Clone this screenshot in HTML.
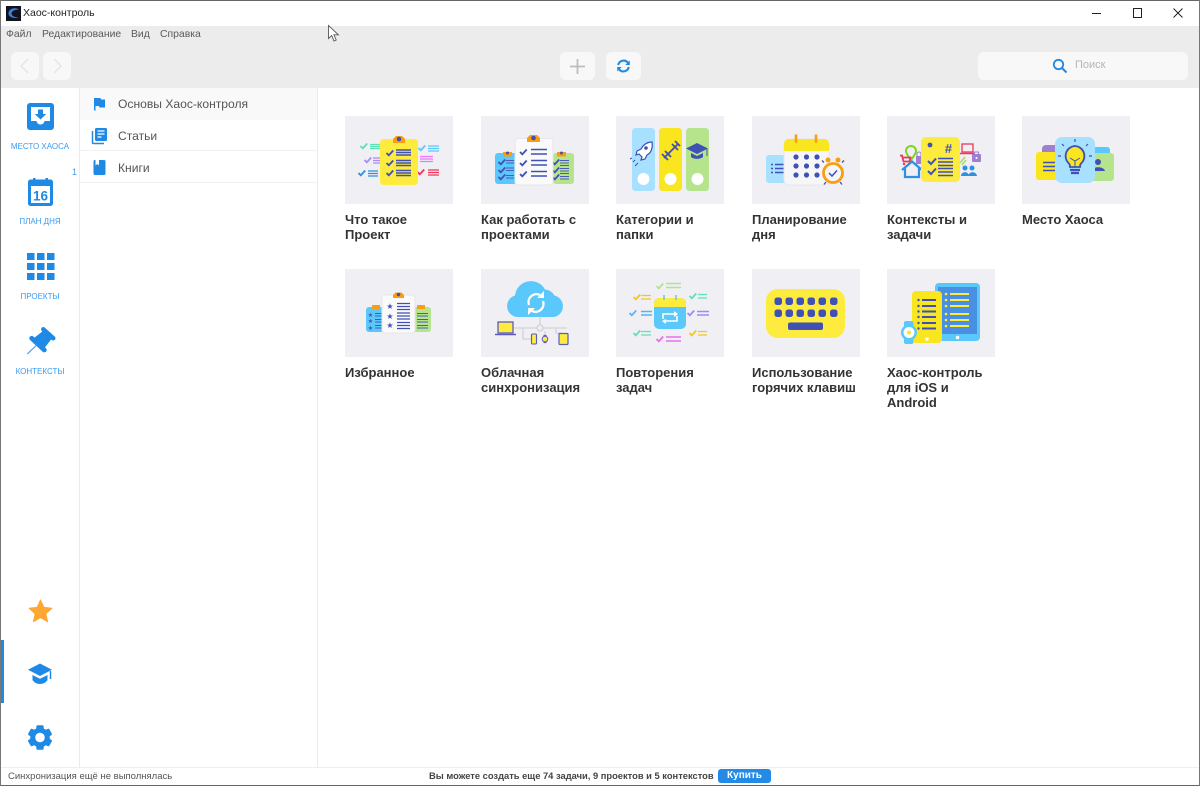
<!DOCTYPE html>
<html lang="ru"><head><meta charset="utf-8"><title>Хаос-контроль</title>
<style>
html,body{margin:0;padding:0;width:1200px;height:786px;overflow:hidden;background:#fff;font-family:"Liberation Sans",sans-serif}
.a{position:absolute}
#win{position:relative;width:1200px;height:786px;overflow:hidden;background:#fff}
.btn{position:absolute;top:52px;height:28px;background:#f8f8f8;border-radius:6px}
.menu{position:absolute;top:28px;font-size:10.4px;line-height:13px;color:#5a5a5a}
.rail{position:absolute;left:1px;width:78px;text-align:center;font-size:8px;line-height:11px;color:#3a9bf0}
.side{position:absolute;left:118px;font-size:12.1px;line-height:16px;color:#555}
.card{position:absolute;width:108px;height:88px;background:#efeff4}
.card svg{display:block}
.t{position:absolute;width:125px;font-size:13px;line-height:15px;font-weight:bold;color:#333}
</style></head><body><div id="win">
<svg width="0" height="0" style="position:absolute"><defs>
<symbol id="c" overflow="visible" width="1" height="1"><path d="M-3.5 0l2.300 2.300 4.400-4.800" fill="none" stroke="currentColor" stroke-width="1.800"/></symbol>
</defs></svg>

<!-- title bar -->
<div class="a" style="left:0;top:26px;width:1200px;height:62px;background:#ececec"></div>
<svg class="a" style="left:6px;top:6px" width="15" height="15" viewBox="0 0 15 15"><rect width="15" height="15" fill="#11131c"/><path d="M13 3.500C9 1 3 2.500 2.500 7c-.4 4 5 6 10.500 4.500C9 11.500 5.500 10 5.500 7.500S9 3.500 13 3.500z" fill="#3f7fd8"/></svg>
<div class="a" style="left:23px;top:7px;font-size:10.5px;line-height:13px;color:#222">Хаос-контроль</div>
<svg class="a" style="left:1085px;top:0" width="110" height="26" viewBox="0 0 110 26"><path d="M7 13.500h9" stroke="#222"/><rect x="48.500" y="8.500" width="8" height="9" fill="none" stroke="#222"/><path d="M88.500 8.500l9 9M97.500 8.500l-9 9" stroke="#222" fill="none"/></svg>

<div class="menu" style="left:6px">Файл</div>
<div class="menu" style="left:42px">Редактирование</div>
<div class="menu" style="left:131px">Вид</div>
<div class="menu" style="left:160px">Справка</div>

<!-- toolbar -->
<div class="btn" style="left:11px;width:28px"><svg width="28" height="28"><path d="M17 7l-7 7 7 7" fill="none" stroke="#e6e6e6" stroke-width="1.500"/></svg></div>
<div class="btn" style="left:43px;width:28px"><svg width="28" height="28"><path d="M11 7l7 7-7 7" fill="none" stroke="#e6e6e6" stroke-width="1.500"/></svg></div>
<div class="btn" style="left:560px;width:35px"><svg width="35" height="28"><path d="M17.500 7v15M10 14.500h15" stroke="#bdbdbd" stroke-width="1.800"/></svg></div>
<div class="btn" style="left:606px;width:35px"><svg width="35" height="28"><path d="M12.200 13A5.500 5.500 0 0 1 22 10.800M22.800 15A5.500 5.500 0 0 1 13 17.200" fill="none" stroke="#1f8ae6" stroke-width="2.100"/><path d="M23.800 8.500v4.500h-4.500zM11.200 19.500V15h4.500z" fill="#1f8ae6"/></svg></div>
<div class="btn" style="left:978px;width:210px"></div>
<svg class="a" style="left:1052px;top:58px" width="16" height="16"><circle cx="6.500" cy="6.500" r="4.700" fill="none" stroke="#1f8ae6" stroke-width="1.800"/><path d="M10 10l4.500 4.500" stroke="#1f8ae6" stroke-width="2"/></svg>
<div class="a" style="left:1075px;top:59px;font-size:11px;line-height:13px;color:#b5b5b5">Поиск</div>

<!-- rail -->
<div class="a" style="left:79px;top:88px;width:1px;height:680px;background:#ebebeb"></div>
<svg class="a" style="left:1px;top:88px" width="78" height="680" viewBox="1 88 78 680">
<rect x="27" y="103" width="27" height="27" rx="3" fill="#1f8ae6"/>
<path d="M31 107h19v14h-5.500c-.6 2.500-2.200 3.500-4 3.500s-3.400-1-4-3.500H31z" fill="#fff"/>
<path d="M38 109.500h5v4.500h3.200l-5.700 5.500-5.700-5.500H38z" fill="#1f8ae6"/>

<path d="M28 182a2.500 2.500 0 0 1 2.500-2.500H33V178h2.500v1.500h10V178H48v1.500h2.500A2.500 2.500 0 0 1 53 182v21.500a2.500 2.500 0 0 1-2.500 2.500h-20a2.500 2.500 0 0 1-2.500-2.500z" fill="#1f8ae6"/>
<rect x="31" y="186" width="19" height="17" fill="#fff"/>
<text x="40.500" y="200.500" text-anchor="middle" font-family="Liberation Sans" font-weight="bold" font-size="13.500" fill="#1f8ae6">16</text>

<g fill="#1f8ae6"><rect x="27" y="253" width="7.500" height="7"/><rect x="37" y="253" width="7.500" height="7"/><rect x="47" y="253" width="7.500" height="7"/><rect x="27" y="263" width="7.500" height="7"/><rect x="37" y="263" width="7.500" height="7"/><rect x="47" y="263" width="7.500" height="7"/><rect x="27" y="273" width="7.500" height="7"/><rect x="37" y="273" width="7.500" height="7"/><rect x="47" y="273" width="7.500" height="7"/></g>

<path d="M43.300 329.300l10 9" stroke="#1f8ae6" stroke-width="4.500" stroke-linecap="round"/>
<path d="M31.700 338.300l12.600 11.700" stroke="#1f8ae6" stroke-width="4.800" stroke-linecap="round"/>
<path d="M43 331l8.500 8-7 9-10.500-10z" fill="#1f8ae6"/>
<path d="M36 345.700l-8.700 8.300" stroke="#5aa9ee" stroke-width="1.300"/>

<path d="M40.500 600l3.400 7.400 8 .9-6 5.400 1.700 8-7.100-4.100-7.100 4.100 1.700-8-6-5.400 8-.9z" fill="#ffa733" stroke="#ffa733" stroke-linejoin="round"/>

<rect x="1" y="640" width="3" height="63" fill="#1f8ae6"/>
<path d="M40 663.500l12 6.200-12 6.300-12-6.300z" fill="#1f8ae6"/>
<path d="M32.500 675l7.500 3.800 7.500-3.800v5c-1.500 2.500-4.500 4-7.500 4s-6-1.500-7.500-4z" fill="#1f8ae6"/>
<path d="M50.500 671v8" stroke="#1f8ae6" stroke-width="1.500"/>

<circle cx="40" cy="737.500" r="9.800" fill="#1f8ae6"/>
<g fill="#1f8ae6"><rect x="36.300" y="725.300" width="7.400" height="24.400" rx="1.500"/><rect x="36.300" y="725.300" width="7.400" height="24.400" rx="1.500" transform="rotate(60 40 737.500)"/><rect x="36.300" y="725.300" width="7.400" height="24.400" rx="1.500" transform="rotate(120 40 737.500)"/></g>
<circle cx="40" cy="737.500" r="4.800" fill="#fff"/>
</svg>
<div class="rail" style="top:141px">МЕСТО ХАОСА</div>
<div class="a" style="left:72px;top:167px;font-size:9px;line-height:11px;color:#3a9bf0">1</div>
<div class="rail" style="top:216px">ПЛАН ДНЯ</div>
<div class="rail" style="top:291px">ПРОЕКТЫ</div>
<div class="rail" style="top:366px">КОНТЕКСТЫ</div>

<!-- middle panel -->
<div class="a" style="left:80px;top:88px;width:237px;height:32px;background:#f9f9f9"></div>
<div class="a" style="left:80px;top:150px;width:237px;height:1px;background:#f2f2f2"></div>
<div class="a" style="left:80px;top:182px;width:237px;height:1px;background:#f2f2f2"></div>
<div class="a" style="left:317px;top:88px;width:1px;height:680px;background:#ebebeb"></div>
<svg class="a" style="left:90px;top:95px" width="20" height="88" viewBox="0 0 20 88">
<path d="M4 3h6.500l.5 1.500H15v8H9.500L9 11H5.500v4.500H4z" fill="#1f8ae6"/>
<rect x="5" y="33" width="12" height="13" rx="1.500" fill="#1f8ae6"/><path d="M7.500 36h7M7.500 39h7M7.500 42h4" stroke="#fff" stroke-width="1.200"/>
<path d="M2.500 36v11.500a1 1 0 0 0 1 1H14" fill="none" stroke="#1f8ae6" stroke-width="1.500"/>
<rect x="3.500" y="65" width="12" height="15" rx="1.500" fill="#1f8ae6"/><path d="M5.500 65h3.500v5.500l-1.750-1.500-1.750 1.500z" fill="#fff"/>
</svg>
<div class="side" style="top:96px">Основы Хаос-контроля</div>
<div class="side" style="top:128px">Статьи</div>
<div class="side" style="top:160px">Книги</div>

<!-- cards -->
<div class="card" style="left:345px;top:116px"><svg width="108" height="88" viewBox="0 0 108 88">
<g stroke-width="1.300" fill="none"><g color="#5ee0b8" stroke="#5ee0b8"><use href="#c" x="19" y="30"/><path d="M25 28.500h10M25 30.500h10M25 32.500h10"/></g>
<g color="#a78bfa" stroke="#a78bfa"><use href="#c" x="23" y="44"/><path d="M28 42h7M28 44.500h7M28 47h7"/></g>
<g color="#2f8fe0" stroke="#2f8fe0"><use href="#c" x="17" y="57"/><path d="M23 55h10M23 57.500h10M23 60h10"/></g>
<g color="#5ac8fa" stroke="#5ac8fa"><use href="#c" x="77" y="32"/><path d="M83 30h11M83 32.500h11M83 35h11"/></g>
<path d="M75 40.500h13M75 43h13M75 45.500h13" stroke="#e879f9"/>
<g color="#f0345a" stroke="#f0345a"><use href="#c" x="76" y="56"/><path d="M83 54h11M83 56.500h11M83 59h11"/></g></g>
<rect x="35" y="23" width="38" height="46" rx="3.500" fill="#fdeb3d"/>
<path d="M48 27v-4l3-3h6l3 3v4z" fill="#fb9d10"/><circle cx="54" cy="23" r="2.300" fill="#3f51b5"/>
<g color="#3f51b5"><use href="#c" x="45" y="37"/><use href="#c" x="45" y="47"/><use href="#c" x="45" y="57"/></g>
<path d="M51 34h15M51 36.500h15M51 39h15M51 44.500h15M51 47h15M51 49.500h15M51 54.500h15M51 57h15M51 59.500h15" stroke="#3f51b5" stroke-width="1.500"/>
</svg></div>

<div class="card" style="left:481px;top:116px"><svg width="108" height="88" viewBox="0 0 108 88">
<rect x="14" y="37" width="22" height="31" rx="3" fill="#5ac8fa"/><rect x="72" y="37" width="21" height="31" rx="3" fill="#b5e48c"/>
<rect x="22" y="36" width="9" height="4.500" fill="#fb9d10"/><circle cx="26.500" cy="37" r="1.500" fill="#3f51b5"/>
<rect x="76" y="36" width="9" height="4.500" fill="#fb9d10"/><circle cx="80.500" cy="37" r="1.500" fill="#3f51b5"/>
<g color="#3f51b5"><use href="#c" x="21" y="46"/><use href="#c" x="21" y="54"/><use href="#c" x="21" y="61"/><use href="#c" x="75" y="46"/><use href="#c" x="75" y="54"/><use href="#c" x="75" y="61"/></g>
<path d="M25 44.500h8M25 47h8M25 52h8M25 54.500h8M25 59.500h8M25 62h8M79 44.500h9M79 47h9M79 49.500h9M79 52.500h9M79 55h9M79 57.500h9M79 60.500h9M79 63h9" stroke="#4a5cba" stroke-width="1"/>
<rect x="34" y="22.500" width="38" height="46.500" rx="3" fill="#fafafa" stroke="#e6e6ee"/>
<path d="M46 26v-4l3-3h7l3 3v4z" fill="#fb9d10"/><circle cx="52.500" cy="22" r="2.300" fill="#3f51b5"/>
<g color="#3f51b5"><use href="#c" x="42.500" y="36"/><use href="#c" x="42.500" y="47"/><use href="#c" x="42.500" y="58"/></g>
<path d="M50 33.500h16M50 38h16M50 44.500h16M50 49h16M50 55.500h16M50 60h16" stroke="#3f51b5" stroke-width="1.600"/>
</svg></div>

<div class="card" style="left:616px;top:116px"><svg width="108" height="88" viewBox="0 0 108 88">
<rect x="16" y="12" width="23" height="63" rx="3.500" fill="#a8e0ff"/><rect x="43" y="12" width="23" height="63" rx="3.500" fill="#fae61e"/><rect x="70" y="12" width="23" height="63" rx="3.500" fill="#b5e48c"/>
<circle cx="27.500" cy="63" r="6" fill="#fff"/><circle cx="54.500" cy="63" r="6" fill="#fff"/><circle cx="81.500" cy="63" r="6" fill="#fff"/>
<path d="M36 26c-5 0-9 3-11 7l-4 2-1 4 3-1 3 3-1 3 4-1 2-4c4-2 6-7 5-13z" fill="#fff" stroke="#3f51b5" stroke-width="1.200"/><circle cx="30" cy="32" r="1.800" fill="#3f51b5"/><path d="M19 44l-2 2M22 47l-3 3M16 42l-2 1" stroke="#3f51b5"/>
<path d="M48 42l14-14" stroke="#3f51b5" stroke-width="1.800"/><path d="M46 38l6 6M49 35l6 6M56 28l6 6M59 25l5 5" stroke="#3f51b5" stroke-width="1.800"/>
<path d="M81 27l11 5.500-11 5.500-11-5.500z" fill="#3f51b5"/><path d="M75 37l6 3 6-3v4c-3 2.500-9 2.500-12 0z" fill="#3f51b5"/><path d="M91 33v7" stroke="#3f51b5"/>
</svg></div>

<div class="card" style="left:752px;top:116px"><svg width="108" height="88" viewBox="0 0 108 88">
<rect x="14" y="39" width="26" height="28" rx="3" fill="#a8e0ff"/>
<path d="M23 48.500h11M23 52.500h11M23 56.500h11" stroke="#3f51b5" stroke-width="1.500"/><path d="M19 48.500h2M19 52.500h2M19 56.500h2" stroke="#3f51b5" stroke-width="1.500"/>
<rect x="32" y="23" width="45" height="46" rx="5" fill="#f6f6f8" stroke="#e6e6ee"/>
<path d="M32 35v-7a5 5 0 0 1 5-5h35a5 5 0 0 1 5 5v7z" fill="#fae61e"/>
<path d="M44 19.500v6M64 19.500v6" stroke="#fb9d10" stroke-width="2.600" stroke-linecap="round"/>
<g fill="#3f51b5"><circle cx="44" cy="41" r="2.600"/><circle cx="54.500" cy="41" r="2.600"/><circle cx="65" cy="41" r="2.600"/><circle cx="44" cy="50" r="2.600"/><circle cx="54.500" cy="50" r="2.600"/><circle cx="65" cy="50" r="2.600"/><circle cx="44" cy="59" r="2.600"/><circle cx="54.500" cy="59" r="2.600"/><circle cx="65" cy="59" r="2.600"/></g>
<path d="M72 46.500l-2-2M90 46.500l2-2M74 66l-2 2.500M88 66l2 2.500" stroke="#3f51b5" stroke-width="1.300"/>
<circle cx="76" cy="44" r="2.500" fill="#fb9d10"/><circle cx="86" cy="44" r="2.500" fill="#fb9d10"/>
<circle cx="81" cy="57" r="9.500" fill="#f6f6f8" stroke="#fb9d10" stroke-width="2.800"/>
<path d="M77 57l3 3 5-5.500" fill="none" stroke="#3f51b5" stroke-width="1.500"/>
</svg></div>

<div class="card" style="left:887px;top:116px"><svg width="108" height="88" viewBox="0 0 108 88">
<path d="M24 30a5 5 0 0 1 5 5c0 3-3 6-5 9-2-3-5-6-5-9a5 5 0 0 1 5-5z" fill="none" stroke="#7ed321" stroke-width="2"/>
<path d="M13 39.500h2l1.500 6h6l1-4H16" fill="none" stroke="#f0345a" stroke-width="1.800"/><circle cx="17" cy="48" r="1.200" fill="#f0345a"/><circle cx="22" cy="48" r="1.200" fill="#f0345a"/>
<rect x="29" y="40" width="6" height="8" fill="#a07fd0"/><path d="M30 40v-2a2 2 0 0 1 4 0v2" stroke="#a07fd0" fill="none"/>
<path d="M15 54l10-8.500L35 54M18 52v9h14v-9" fill="none" stroke="#2f8fe0" stroke-width="2.200"/>
<rect x="34" y="21" width="39" height="45" rx="5" fill="#fdeb3d"/>
<circle cx="43" cy="29" r="2.400" fill="#3f51b5"/>
<text x="61.500" y="37" text-anchor="middle" font-family="Liberation Sans" font-weight="bold" font-size="13" fill="#3f51b5">#</text>
<path d="M41 45l3 3 5-5.500M41 55l3 3 5-5.500" fill="none" stroke="#3f51b5" stroke-width="2"/>
<path d="M51 42.500h15M51 46h15M51 49.500h15M51 52.500h15M51 56h15M51 59.500h15" stroke="#3f51b5" stroke-width="1.500"/>
<rect x="75" y="28" width="11" height="8" fill="none" stroke="#f0345a" stroke-width="1.300"/><path d="M73 37.500h15" stroke="#f0345a" stroke-width="1.500"/>
<rect x="85" y="38" width="9" height="8" rx="1" fill="#a07fd0"/><path d="M87.500 38v-2h4v2" fill="none" stroke="#a07fd0"/><circle cx="89.500" cy="42" r="1" fill="#fff"/>
<path d="M73 47l5-6M75 49l4-5" stroke="#a8d86a" stroke-width="1.500"/>
<g fill="#2f8fe0"><circle cx="78" cy="52" r="2.500"/><circle cx="85" cy="52" r="2.500"/><path d="M74 60c0-5 8-5 8 0zM81.500 60c0-5 8-5 8.500 0z"/></g>
</svg></div>

<div class="card" style="left:1022px;top:116px"><svg width="108" height="88" viewBox="0 0 108 88">
<path d="M20 36v-3a4 4 0 0 1 4-4h12v8z" fill="#a07fd0"/><path d="M71 37v-6h14a3 3 0 0 1 3 3v3z" fill="#5ac8fa"/>
<rect x="14" y="36" width="24" height="28" rx="3" fill="#fae61e"/>
<rect x="68" y="37" width="24" height="28" rx="3" fill="#b5e48c"/>
<path d="M21 46.500h12M21 50.500h12M21 54.500h12" stroke="#3f51b5" stroke-width="1.500"/>
<circle cx="76" cy="46" r="3" fill="#3f51b5"/><path d="M70 55c0-5 12-5 13 0z" fill="#3f51b5"/>
<rect x="33" y="21" width="40" height="46" rx="7" fill="#a8e0ff"/>
<path d="M53 30a10 10 0 0 0-6 17.500c1 1 1 2 1 3.500h10c0-1.500 0-2.500 1-3.500A10 10 0 0 0 53 30z" fill="#fae61e" stroke="#3f51b5" stroke-width="1.800"/>
<path d="M48 42l5 3 5-3M53 45v6" fill="none" stroke="#3f51b5"/>
<path d="M48 54h10M49 57h8" stroke="#3f51b5" stroke-width="2.200"/>
<path d="M53 23v3M40 28l2 2M66 28l-2 2M36 40h3M67 40h3" stroke="#3f51b5" stroke-width="1.200"/>
</svg></div>

<div class="card" style="left:345px;top:269px"><svg width="108" height="88" viewBox="0 0 108 88">
<rect x="21" y="38" width="20" height="25" rx="3" fill="#5ac8fa"/><rect x="66" y="38" width="20" height="25" rx="3" fill="#b5e48c"/>
<rect x="27" y="36" width="8" height="4" fill="#fb9d10"/><rect x="72" y="36" width="8" height="4" fill="#fb9d10"/>
<path d="M30 44.500h8M30 47h8M30 50.500h8M30 53h8M30 56.500h8M30 59h8M72 44.500h11M72 47h11M72 50.500h11M72 53h11M72 56.500h11M72 59h11" stroke="#4a5cba"/>
<g fill="#3f51b5" font-family="DejaVu Sans" font-size="6" text-anchor="middle"><text x="25.500" y="48">★</text><text x="25.500" y="54">★</text><text x="25.500" y="61">★</text></g>
<rect x="37" y="26" width="33" height="38" rx="3" fill="#fafafa" stroke="#e6e6ee"/>
<path d="M48 29v-3l2.500-2.500h6L59 26v3z" fill="#fb9d10"/><circle cx="53.500" cy="25.500" r="1.800" fill="#3f51b5"/>
<g fill="#3f51b5" font-family="DejaVu Sans" font-size="8" text-anchor="middle"><text x="45" y="40">★</text><text x="45" y="50">★</text><text x="45" y="59">★</text></g>
<path d="M52 34.500h13M52 37.500h13M52 40.500h13M52 44h13M52 47h13M52 50h13M52 53.500h13M52 56.500h13M52 59.500h13" stroke="#3f51b5" stroke-width="1.300"/>
</svg></div>

<div class="card" style="left:481px;top:269px"><svg width="108" height="88" viewBox="0 0 108 88">
<path d="M36 48a11 11 0 0 1-2-21.500 16 16 0 0 1 30-6 12 12 0 0 1 9.500 6A11 11 0 0 1 73 48z" fill="#5ac8fa"/>
<path d="M48 36a8 8 0 0 1 11-10M62 32a8 8 0 0 1-11 10" fill="none" stroke="#fff" stroke-width="2.300"/><path d="M63 22v7h-7zM47 46v-7h7z" fill="#fff"/>
<path d="M59 48v9M33 59h53M42 59v11h10M64 70v-8M75 59v5h5" fill="none" stroke="#d8d8dc" stroke-width="1.600"/>
<circle cx="59" cy="59" r="3" fill="#efeff4" stroke="#d0d0d6" stroke-width="1.300"/>
<rect x="17" y="53" width="15" height="11" fill="#fdeb3d" stroke="#5b5bc4" stroke-width="1.300"/><path d="M14 65.500h21" stroke="#5b5bc4" stroke-width="1.600"/>
<rect x="50.500" y="65" width="5" height="10" rx="1" fill="#fdeb3d" stroke="#5b5bc4" stroke-width="1.100"/>
<circle cx="64" cy="70" r="2.800" fill="#fdeb3d" stroke="#5b5bc4" stroke-width="1"/><path d="M62.500 66.500h3M62.500 73.500h3" stroke="#5b5bc4" stroke-width="1.300"/>
<rect x="78" y="64.500" width="9" height="11" rx="1" fill="#fdeb3d" stroke="#5b5bc4" stroke-width="1.200"/>
</svg></div>

<div class="card" style="left:616px;top:269px"><svg width="108" height="88" viewBox="0 0 108 88">
<g fill="none" stroke-width="1.300">
<g color="#b5e48c" stroke="#b5e48c"><use href="#c" x="44" y="17"/><path d="M50 14.500h15M50 18.500h15" stroke-width="1.600"/></g>
<g color="#fcc419" stroke="#fcc419"><use href="#c" x="21" y="28"/><path d="M25 26.500h10M25 30h10"/></g>
<g color="#5ee0b8" stroke="#5ee0b8"><use href="#c" x="77" y="27"/><path d="M82 25.500h9M82 29h9"/></g>
<g color="#5ab4f0" stroke="#5ab4f0"><use href="#c" x="17" y="44"/><path d="M25 42.500h11M25 46h11" stroke-width="1.500"/></g>
<g color="#9d8cf5" stroke="#9d8cf5"><use href="#c" x="75" y="44"/><path d="M81 42.500h12M81 46h12" stroke-width="1.500"/></g>
<g color="#5ee0b8" stroke="#5ee0b8"><use href="#c" x="21" y="64"/><path d="M25 62.500h10M25 66h10"/></g>
<g color="#fcc419" stroke="#fcc419"><use href="#c" x="77" y="64"/><path d="M82 62.500h9M82 66h9"/></g>
<g color="#e86ef0" stroke="#e86ef0"><use href="#c" x="44" y="70"/><path d="M50 68h15M50 72h15" stroke-width="1.600"/></g></g>
<rect x="38" y="29" width="32" height="31" rx="5" fill="#5ac8fa"/>
<path d="M38 38v-4a5 5 0 0 1 5-5h22a5 5 0 0 1 5 5v4z" fill="#fdeb3d"/>
<path d="M48 26v5M60 26v5" stroke="#5ac8fa" stroke-width="1.500"/>
<path d="M47 50v-5h12M61 47v5H49" fill="none" stroke="#fff" stroke-width="1.600"/><path d="M58 42l4 3-4 3zM50 50l-4 2 4 3z" fill="#fff"/>
</svg></div>

<div class="card" style="left:752px;top:269px"><svg width="108" height="88" viewBox="0 0 108 88">
<rect x="14" y="20" width="79" height="49" rx="12" fill="#fdeb3d"/>
<g fill="#3f51b5"><rect x="22.500" y="28.500" width="7.500" height="7.500" rx="2.500"/><rect x="33.500" y="28.500" width="7.500" height="7.500" rx="2.500"/><rect x="44.500" y="28.500" width="7.500" height="7.500" rx="2.500"/><rect x="55.500" y="28.500" width="7.500" height="7.500" rx="2.500"/><rect x="66.500" y="28.500" width="7.500" height="7.500" rx="2.500"/><rect x="78" y="28.500" width="7.500" height="7.500" rx="2.500"/>
<rect x="22.500" y="40.500" width="7.500" height="7.500" rx="2.500"/><rect x="33.500" y="40.500" width="7.500" height="7.500" rx="2.500"/><rect x="44.500" y="40.500" width="7.500" height="7.500" rx="2.500"/><rect x="55.500" y="40.500" width="7.500" height="7.500" rx="2.500"/><rect x="66.500" y="40.500" width="7.500" height="7.500" rx="2.500"/><rect x="78" y="40.500" width="7.500" height="7.500" rx="2.500"/>
<rect x="36" y="53.500" width="35" height="7.500" rx="2"/></g>
</svg></div>

<div class="card" style="left:887px;top:269px"><svg width="108" height="88" viewBox="0 0 108 88">
<rect x="48" y="14" width="45" height="58" rx="4" fill="#5ac8fa"/><rect x="51" y="18" width="39" height="47" fill="#4a90e2"/><circle cx="70.500" cy="68.500" r="1.800" fill="#fff"/>
<g fill="#fdeb3d"><circle cx="59" cy="25" r="1.300"/><circle cx="59" cy="31" r="1.300"/><circle cx="59" cy="37" r="1.300"/><circle cx="59" cy="45" r="1.300"/><circle cx="59" cy="51" r="1.300"/><circle cx="59" cy="57" r="1.300"/></g>
<path d="M63 25h19M63 31h19M63 37h19M63 45h19M63 51h19M63 57h19" stroke="#fdeb3d" stroke-width="2"/>
<rect x="25" y="22" width="30" height="52" rx="4" fill="#fae61e"/><circle cx="40" cy="70" r="1.800" fill="#fff"/>
<g fill="#3f51b5"><circle cx="31.500" cy="31" r="1.200"/><circle cx="31.500" cy="37" r="1.200"/><circle cx="31.500" cy="42.500" r="1.200"/><circle cx="31.500" cy="48" r="1.200"/><circle cx="31.500" cy="54" r="1.200"/><circle cx="31.500" cy="59.500" r="1.200"/></g>
<path d="M35 31h14M35 37h14M35 42.500h14M35 48h14M35 54h14M35 59.500h14" stroke="#3f51b5" stroke-width="2"/>
<rect x="17" y="52" width="9.500" height="23" rx="2" fill="#5ac8fa"/><circle cx="22" cy="63.500" r="8" fill="#5ac8fa"/><circle cx="22" cy="63.500" r="5.500" fill="#fff"/><circle cx="22" cy="63.500" r="2" fill="#fae61e"/>
</svg></div>

<div class="t" style="left:345px;top:212px">Что такое<br>Проект</div>
<div class="t" style="left:481px;top:212px">Как работать с<br>проектами</div>
<div class="t" style="left:616px;top:212px">Категории и<br>папки</div>
<div class="t" style="left:752px;top:212px">Планирование<br>дня</div>
<div class="t" style="left:887px;top:212px">Контексты и<br>задачи</div>
<div class="t" style="left:1022px;top:212px">Место Хаоса</div>
<div class="t" style="left:345px;top:365px">Избранное</div>
<div class="t" style="left:481px;top:365px">Облачная<br>синхронизация</div>
<div class="t" style="left:616px;top:365px">Повторения<br>задач</div>
<div class="t" style="left:752px;top:365px">Использование<br>горячих клавиш</div>
<div class="t" style="left:887px;top:365px">Хаос-контроль<br>для iOS и<br>Android</div>

<!-- status bar -->
<div class="a" style="left:0;top:767px;width:1200px;height:1px;background:#eeeeee"></div>
<div class="a" style="left:8px;top:770px;font-size:9.5px;line-height:13px;color:#555">Синхронизация ещё не выполнялась</div>
<div class="a" style="left:429px;top:770px;font-size:9.35px;line-height:12px;font-weight:bold;color:#444;white-space:nowrap">Вы можете создать еще 74 задачи, 9 проектов и 5 контекстов</div>
<div class="a" style="left:718px;top:769px;width:53px;height:14px;background:#238be6;border-radius:3px;color:#fff;font-size:10px;font-weight:bold;line-height:14px;text-align:center">Купить</div>

<!-- cursor -->
<svg class="a" style="left:327px;top:24px" width="14" height="19" viewBox="0 0 14 19"><path d="M1.500 1.500v13l3.200-3 2.300 5.500 2.200-1-2.300-5.200h4.500z" fill="#fff" stroke="#555" stroke-width=".9"/></svg>

<!-- window border -->
<div class="a" style="left:0;top:0;width:1200px;height:1px;background:#666"></div>
<div class="a" style="left:0;top:785px;width:1200px;height:1px;background:#666"></div>
<div class="a" style="left:0;top:0;width:1px;height:786px;background:#777"></div>
<div class="a" style="left:1199px;top:0;width:1px;height:786px;background:#777"></div>
</div></body></html>
